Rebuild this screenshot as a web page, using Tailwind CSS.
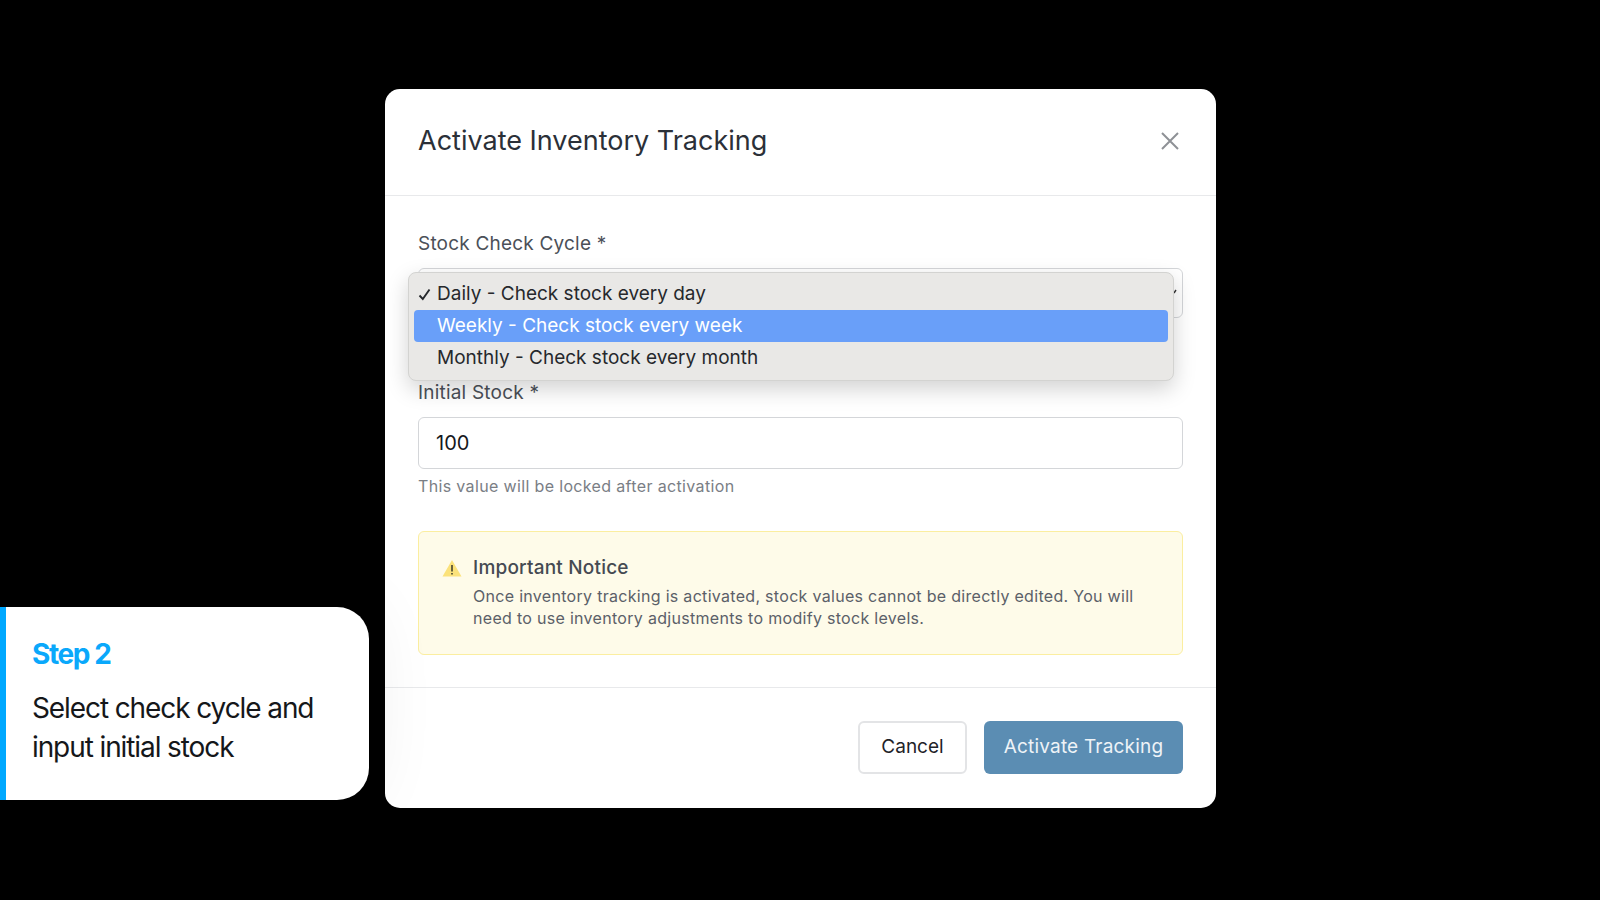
<!DOCTYPE html>
<html lang="en">
<head>
    <meta charset="UTF-8">
    <title>Activate Inventory Tracking</title>
    <script src="https://cdn.jsdelivr.net/npm/@tailwindcss/browser@4"></script>
</head>
<body class="bg-black font-['Inter',sans-serif]">
    <div class="relative w-[1600px] h-[900px] overflow-hidden bg-black">
        <!-- modal -->
        <div class="absolute left-[385px] top-[89px] w-[831px] h-[719px] bg-white rounded-[15px] flex flex-col">
            <div class="h-[107px] shrink-0 border-b border-[#e8e9eb] flex items-center justify-between pl-[33px] pr-[36px]">
                <h1 class="text-[27px] leading-[34px] font-normal text-[#2b3038] -mt-[2px]">Activate Inventory Tracking</h1>
                <svg class="w-[20px] h-[20px] -mt-[3px]" viewBox="0 0 20 20" fill="none" stroke="#8e9196" stroke-width="2"><path d="M2 2 L18 18 M18 2 L2 18"/></svg>
            </div>
            <div class="flex-1 px-[33px] pt-[36px]">
                <label class="block text-[19px] leading-[23px] text-[#4b5058] tracking-[0.2px]">Stock Check Cycle *</label>
                <div class="relative mt-[13px] h-[50px] border border-[#d4d6d9] rounded-[6px] bg-white">
                    <svg class="absolute right-[5px] top-[20px] w-[6px] h-[5px]" viewBox="0 0 6 5" fill="none" stroke="#333" stroke-width="1.4"><path d="M5 1 L3 4"/></svg>
                </div>
                <label class="block mt-[63px] text-[19px] leading-[23px] text-[#4b5058] tracking-[0.2px]">Initial Stock *</label>
                <div class="mt-[13px] h-[52px] border border-[#d4d6d9] rounded-[6px] bg-white flex items-center px-[17px] text-[20px] text-[#15181c]">100</div>
                <p class="mt-[7px] text-[16px] leading-[20px] text-[#7a7e85] tracking-[0.35px]">This value will be locked after activation</p>
                <div class="mt-[35px] h-[124px] border border-[#fbeea0] bg-[#fefbe9] rounded-[6px] flex gap-[11px] pl-[23px] pt-[24px]">
                    <svg class="w-[20px] h-[18px] mt-[3px] shrink-0" viewBox="0 0 20 18"><path d="M10 1 L19.5 17.5 L0.5 17.5 Z" fill="#fbe27a"/><path d="M10 6 V12.5 M10 14 V15.6" stroke="#3a3a2a" stroke-width="1.5"/></svg>
                    <div>
                        <div class="text-[19px] leading-[24px] font-medium text-[#454a52] tracking-[0.2px]">Important Notice</div>
                        <p class="mt-[5px] text-[16px] leading-[22px] text-[#5b6068] tracking-[0.3px]">Once inventory tracking is activated, stock values cannot be directly edited. You will<br>need to use inventory adjustments to modify stock levels.</p>
                    </div>
                </div>
            </div>
            <div class="h-[121px] shrink-0 border-t border-[#e8e9eb] flex justify-end gap-[17px] pt-[33px] pr-[33px]">
                <button class="w-[109px] h-[53px] border-2 border-[#e3e4e6] rounded-[6px] bg-white text-[19px] text-[#1f2328]">Cancel</button>
                <button class="w-[199px] h-[53px] rounded-[6px] bg-[#5b8db3] text-[19px] text-[#eef3f7] tracking-[0.2px]">Activate Tracking</button>
            </div>
        </div>

        <!-- native select menu -->
        <div class="absolute left-[408px] top-[272px] w-[766px] h-[109px] bg-[#e9e8e6] border border-[#d3d3d1] rounded-[8px] px-[5px] py-[5px] text-[19px] text-[#26282c] shadow-[0_8px_22px_rgba(0,0,0,0.18)]">
            <div class="relative h-[32px] pl-[23px] flex items-center">
                <svg class="absolute left-[4px] top-[10px] w-[13px] h-[13px]" viewBox="0 0 13 13" fill="none" stroke="#26282c" stroke-width="1.9"><path d="M1.5 7.5 L4.8 11 L11.5 1.5"/></svg>
                Daily - Check stock every day
            </div>
            <div class="h-[32px] pl-[23px] flex items-center bg-[#699ff9] rounded-[4px] text-white">Weekly - Check stock every week</div>
            <div class="h-[32px] pl-[23px] flex items-center">Monthly - Check stock every month</div>
        </div>

        <!-- step card -->
        <div class="absolute left-0 top-[607px] w-[369px] h-[193px] bg-white border-l-[6px] border-[#00a8ff] rounded-r-[32px] pl-[26px] pt-[29px] shadow-[0_0_70px_rgba(0,0,0,0.08)]">
            <div class="text-[28px] leading-[36px] font-bold text-[#0aa8fb] tracking-[-1.4px]">Step 2</div>
            <p class="mt-[17px] text-[28px] leading-[39px] text-[#15171a] tracking-[-1.1px]">Select check cycle and<br>input initial stock</p>
        </div>
    </div>
</body>
</html>
